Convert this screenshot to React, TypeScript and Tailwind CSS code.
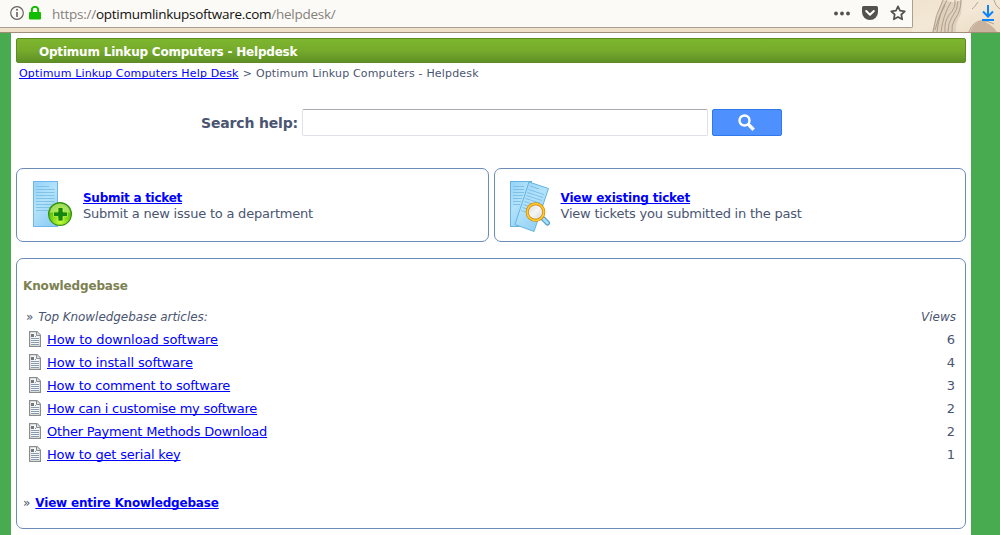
import type { ReactNode } from "react";

const articles = [
  { title: "How to download software", views: 6, spacing: "tracking-[-0.06px]" },
  { title: "How to install software", views: 4, spacing: "tracking-[-0.12px]" },
  { title: "How to comment to software", views: 3, spacing: "tracking-[-0.21px]" },
  { title: "How can i customise my software", views: 2, spacing: "tracking-[-0.27px]" },
  { title: "Other Payment Methods Download", views: 2, spacing: "tracking-[-0.21px]" },
  { title: "How to get serial key", views: 1, spacing: "tracking-[-0.18px]" },
];

function Link({ children, className = "" }: { children: ReactNode; className?: string }) {
  return (
    <a
      href="#"
      className={`whitespace-nowrap text-[#0000ff] underline decoration-1 underline-offset-1 [text-decoration-skip-ink:none] ${className}`}
    >
      {children}
    </a>
  );
}

function BrowserBar() {
  return (
    <div className="relative flex h-[33px] w-full border-b border-[#a08d77] bg-[#eee0c9]">
      <svg className="absolute left-[912px] top-0" width="88" height="32" viewBox="0 0 88 32" fill="none">
        <defs>
          <linearGradient id="paper" x1="0" y1="0" x2="1" y2="1">
            <stop offset="0" stopColor="#f0e4cf" />
            <stop offset="0.5" stopColor="#f3e8d6" />
            <stop offset="1" stopColor="#eadbc3" />
          </linearGradient>
        </defs>
        <rect width="88" height="32" fill="url(#paper)" />
        <path d="M31 0Q42 4 50 0L49 14Q43 24 44 32H20Q25 12 31 0Z" fill="#e0d1bc" />
        <g stroke="#917f70" strokeWidth="0.9" opacity="0.7">
          <path d="M31 0Q23 15 21 32M35 0Q27 13 25 32M39 2Q31 15 29 32M33 5Q26 17 23 30M43 0Q44 8 37 15Q32 22 33 32M46 1Q46 10 40 17Q36 23 36 32M49 0Q49 11 43 19Q39 25 40 32" />
          <path d="M57 32Q60 23 68 21Q75 20 82 24M66 2Q62 8 60 9M82 0Q83 6 88 9" />
        </g>
        <path d="M58 32Q61 23 69 21Q78 22 85 32Z" fill="#c9b39e" />
      </svg>
      <div className="relative flex h-[28px] w-[913px] items-center rounded-br-[2px] border-b border-r border-[#aaa092] bg-[#fcfaf6]">
        <svg className="ml-[10px] mb-px shrink-0" width="14" height="14" viewBox="0 0 14 14" fill="none">
          <circle cx="7" cy="7" r="6.3" stroke="#66625e" strokeWidth="1.2" />
          <path d="M7 6V11" stroke="#66625e" strokeWidth="1.6" />
          <circle cx="7" cy="3.8" r="1" fill="#66625e" />
        </svg>
        <svg className="ml-[5px] mb-px shrink-0" width="12" height="14" viewBox="0 0 12 14">
          <path d="M2.8 7V4A3.2 3.2 0 0 1 9.2 4V7" fill="none" stroke="#12bc00" strokeWidth="2" />
          <rect y="6" width="12" height="7.5" rx="1" fill="#12bc00" />
        </svg>
        <span className="ml-[11px] whitespace-nowrap font-['Open_Sans','Noto_Sans',sans-serif] text-[13.5px] leading-5 tracking-[-0.27px] text-[#84817d]">
          https://<span className="text-[#101010]">optimumlinkupsoftware.com</span>/helpdesk/
        </span>
        <div className="ml-auto mr-[6px] mb-px flex items-center">
          <svg width="16" height="5" viewBox="0 0 16 5" fill="#55514e">
            <circle cx="2" cy="2.5" r="1.9" />
            <circle cx="8" cy="2.5" r="1.9" />
            <circle cx="14" cy="2.5" r="1.9" />
          </svg>
          <svg className="ml-[12px]" width="16" height="14" viewBox="0 0 16 14">
            <path d="M1.5 0H14.5Q16 0 16 1.5V6A8 8 0 0 1 0 6V1.5Q0 0 1.5 0Z" fill="#55514e" />
            <path d="M4.2 5L8 8.7L11.8 5" fill="none" stroke="#fff" strokeWidth="2" strokeLinecap="round" strokeLinejoin="round" />
          </svg>
          <svg className="ml-[12px]" width="16" height="16" viewBox="0 0 16 16">
            <path d="M8 1.3L10 5.7L14.8 6.3L11.3 9.5L12.2 14.3L8 11.9L3.8 14.3L4.7 9.5L1.2 6.3L6 5.7Z" fill="none" stroke="#55514e" strokeWidth="1.7" strokeLinejoin="round" />
          </svg>
        </div>
      </div>
      <svg className="absolute left-[982px] top-[5px]" width="12" height="17" viewBox="0 0 12 17" fill="none" stroke="#0a84ff" strokeWidth="2">
        <path d="M6 0V11M1 6.5L6 11.5L11 6.5M0 15H12" />
      </svg>
    </div>
  );
}

function PaperGradients() {
  return (
    <defs>
      <linearGradient id="sheet" x1="0" y1="0" x2="0.6" y2="1">
        <stop offset="0" stopColor="#93d2f8" />
        <stop offset="0.5" stopColor="#b4e3fb" />
        <stop offset="1" stopColor="#90cff5" />
      </linearGradient>
      <radialGradient id="plusFill" cx="0.5" cy="0.85" r="0.8">
        <stop offset="0" stopColor="#c2fb38" />
        <stop offset="0.5" stopColor="#74d516" />
        <stop offset="1" stopColor="#43ad0b" />
      </radialGradient>
      <linearGradient id="lens" x1="0" y1="0" x2="1" y2="1">
        <stop offset="0" stopColor="#d3d9df" />
        <stop offset="0.5" stopColor="#f5f5f5" />
        <stop offset="1" stopColor="#cfd3d5" />
      </linearGradient>
    </defs>
  );
}

function SubmitIcon() {
  return (
    <svg className="shrink-0" width="42" height="52" viewBox="0 0 42 52">
      <PaperGradients />
      <rect x="1.5" y="1.5" width="24" height="45" fill="url(#sheet)" stroke="#70b6ed" />
      <path d="M4 6.5H17M4 9.5H22.5M4 12.5H22.5M4 15.5H22.5M4 18.5H22.5M4 21.5H22.5M4 24.5H20M4 27.5H18M4 30.5H16" stroke="#7cbfe4" strokeWidth="0.9" />
      <circle cx="28" cy="34" r="11.4" fill="url(#plusFill)" stroke="#398e16" strokeWidth="1.2" />
      <path d="M18 33A10 9.5 0 0 1 38 33Q29 29 18 33Z" fill="#d3f48d" opacity="0.65" />
      <path d="M26 27.5H31V32H35.5V36.500H31V41H26V36.500H21.5V32H26Z" fill="#168613" stroke="#d5fb4b" strokeWidth="0.7" />
    </svg>
  );
}

function ViewIcon() {
  return (
    <svg className="ml-[-1px] mr-px shrink-0" width="42" height="53" viewBox="0 0 42 53">
      <rect x="1.5" y="1.5" width="21" height="45" fill="url(#sheet)" stroke="#66b4e2" />
      <path d="M4 6.5H15M4 9.5H15M4 12.5H15M4 15.5H14M4 18.5H13M4 21.5H12M4 24.5H11" stroke="#78bde2" strokeWidth="0.9" />
      <path d="M20 2L39.5 8.5L25 51.5L6 44.5Z" fill="url(#sheet)" stroke="#66b4e2" />
      <path d="M21 6L30 9M19.500 9.500L35 14.500M18.500 12.500L34 17.500M17.500 15.500L33 20.500M16.500 18.500L31 23M15.500 21.500L23 24M14.500 24.500L19 26M13.500 27.500L18 29M12.500 30.500L17 32" stroke="#78bde2" strokeWidth="0.9" />
      <path d="M34.5 39L38.5 43" stroke="#4d9ac5" strokeWidth="5" strokeLinecap="round" />
      <path d="M34.500 39L38.5 43" stroke="#a9dff6" strokeWidth="2.8" strokeLinecap="round" />
      <circle cx="26.5" cy="32" r="8.3" fill="url(#lens)" stroke="#c77d0b" strokeWidth="3" />
      <circle cx="26.5" cy="32" r="8.3" fill="none" stroke="#ffca28" strokeWidth="1.8" />
    </svg>
  );
}

function DocIcon() {
  return (
    <svg className="mb-px ml-[6px] shrink-0" width="12" height="16" viewBox="0 0 12 16">
      <path d="M0.6 0.6H8L11.4 4V15.4H0.6Z" fill="#f5f8fa" stroke="#8c8c8c" strokeWidth="1.2" />
      <path d="M7.500 0.500V4.500H11.500" fill="#d6e1e9" stroke="#8c8c8c" />
      <rect x="2" y="3" width="3" height="3" fill="#777" />
      <path d="M6 5.5H7M2 7.500H10M2 9.500H10M2 11.500H10M2 13.500H10" stroke="#879baa" />
    </svg>
  );
}

function TicketCard({ icon, title, text, titleClass, textClass }: { icon: ReactNode; title: string; text: string; titleClass: string; textClass: string }) {
  return (
    <section className="flex h-[74px] flex-1 rounded-[7px] border border-[#6b8bb9] pl-[15px] pt-[11px]">
      {icon}
      <div className="ml-[9px] flex flex-col items-start pt-[10px] text-[13px] leading-4">
        <Link className={`text-[12px] font-bold ${titleClass}`}>{title}</Link>
        <span className={`whitespace-nowrap ${textClass}`}>{text}</span>
      </div>
    </section>
  );
}

export default function App() {
  return (
    <div className="h-[535px] w-[1000px] overflow-hidden bg-[#48ab4f] font-['DejaVu_Sans',sans-serif] text-[#4a5571]">
      <BrowserBar />
      <main className="ml-[11px] h-[502px] w-[960px] bg-white px-[5px] pt-[5px]">
        <header className="flex h-[25px] items-center rounded-[2px] border border-[#5c8c22] bg-linear-to-b from-[#7eb62f] via-[#76ab2b] to-[#5e9026] pl-[22px] pt-[2px] text-[12px] font-bold text-white">
          <span className="tracking-[-0.21px]">Optimum Linkup Computers - Helpdesk</span>
        </header>
        <nav className="flex h-[20px] items-center gap-[4px] pl-[3px] pt-[2px] text-[11px]">
          <Link className="tracking-[0.155px]">Optimum Linkup Computers Help Desk</Link>
          <span>&gt;</span>
          <span className="tracking-[0.17px]">Optimum Linkup Computers - Helpdesk</span>
        </nav>
        <div className="mt-[26px] flex h-[27px] items-center pl-[185px]">
          <label className="w-[101px] whitespace-nowrap text-[14px] font-bold leading-5 tracking-[-0.17px]">Search help:</label>
          <input className="h-[27px] w-[406px] rounded-[2px] border border-[#e0e0e9] border-t-[#aaa9b0] bg-white outline-none" />
          <button className="ml-[4px] flex h-[27px] w-[70px] items-center justify-center rounded-[2px] border border-[#3079ed] bg-[#4d90fe]">
            <svg className="mb-px ml-[-1px]" width="17" height="17" viewBox="0 0 17 17" fill="none" stroke="white">
              <circle cx="6.5" cy="6.5" r="5" strokeWidth="2.4" />
              <path d="M10.5 10.5L15.700 15.700" strokeWidth="3.4" />
            </svg>
          </button>
        </div>
        <div className="mt-[32px] flex gap-[5px]">
          <TicketCard icon={<SubmitIcon />} title="Submit a ticket" text="Submit a new issue to a department" titleClass="tracking-[-0.27px]" textClass="tracking-[-0.21px]" />
          <TicketCard icon={<ViewIcon />} title="View existing ticket" text="View tickets you submitted in the past" titleClass="tracking-[-0.19px]" textClass="tracking-[-0.22px]" />
        </div>
        <section className="mt-[16px] h-[271px] rounded-[7px] border border-[#6b8bb9] pl-[6px] pt-[18px] text-[13px]">
          <h2 className="h-[18px] text-[12px] font-bold leading-[18px] tracking-[-0.15px] text-[#7c8151]">Knowledgebase</h2>
          <div className="mt-[12px] flex h-[20px] items-center justify-between pl-[3px] pr-[9px] text-[12px]">
            <div className="flex gap-[5px]">
              <span>»</span><span className="italic tracking-[-0.06px]">Top Knowledgebase articles:</span>
            </div>
            <span className="italic">Views</span>
          </div>
          <ul className="pt-px">
            {articles.map((article) => (
              <li key={article.title} className="flex h-[23px] items-center pr-[10px]">
                <DocIcon />
                <Link className={`ml-[6px] ${article.spacing}`}>{article.title}</Link>
                <span className="ml-auto">{article.views}</span>
              </li>
            ))}
          </ul>
          <div className="mt-[27px] flex h-[20px] items-center gap-[5px]">
            <span className="text-[12px]">»</span>
            <Link className="text-[12px] font-bold tracking-[-0.19px]">View entire Knowledgebase</Link>
          </div>
        </section>
      </main>
    </div>
  );
}
